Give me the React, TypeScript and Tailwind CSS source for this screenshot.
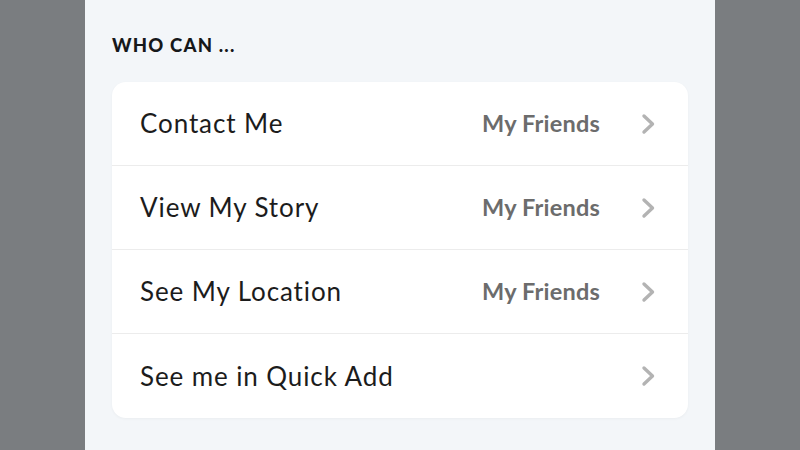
import React from "react";

const rows = [
  { label: "Contact Me", value: "My Friends" },
  { label: "View My Story", value: "My Friends" },
  { label: "See My Location", value: "My Friends" },
  { label: "See me in Quick Add", value: "" },
];

function Chevron() {
  return (
    <svg width="16" height="22" viewBox="0 0 16 22" fill="none">
      <path d="M4 3 L12.5 11 L4 19" stroke="#b3b3b3" strokeWidth="3.4" strokeLinecap="round" strokeLinejoin="round" />
    </svg>
  );
}

export default function App() {
  return (
    <div className="w-[800px] h-[450px] bg-[#7a7d80] flex justify-center overflow-hidden" style={{ fontFamily: "Lato, 'Noto Sans', sans-serif" }}>
      <div className="w-[630px] h-full bg-[#f3f6f9] px-[27px] pt-[35px]">
        <div className="text-[18.5px] font-black text-[#16181a] tracking-[1.2px] leading-[20px] h-[20px]">WHO CAN ...</div>
        <div className="mt-[27px] bg-white rounded-[14px] shadow-[0_1px_3px_rgba(0,0,0,0.04)]">
          {rows.map((r, i) => (
            <div key={i} className={`h-[84px] flex items-center pl-[28px] pr-[32px] ${i < rows.length - 1 ? "border-b border-[#ececec]" : ""}`}>
              <div className="flex-1 text-[26px] text-[#1c1c1c] tracking-[0.9px]">{r.label}</div>
              <div className="text-[23.5px] font-bold text-[#6c6c6c] tracking-[0.2px] mr-[40px]">{r.value}</div>
              <Chevron />
            </div>
          ))}
        </div>
      </div>
    </div>
  );
}
